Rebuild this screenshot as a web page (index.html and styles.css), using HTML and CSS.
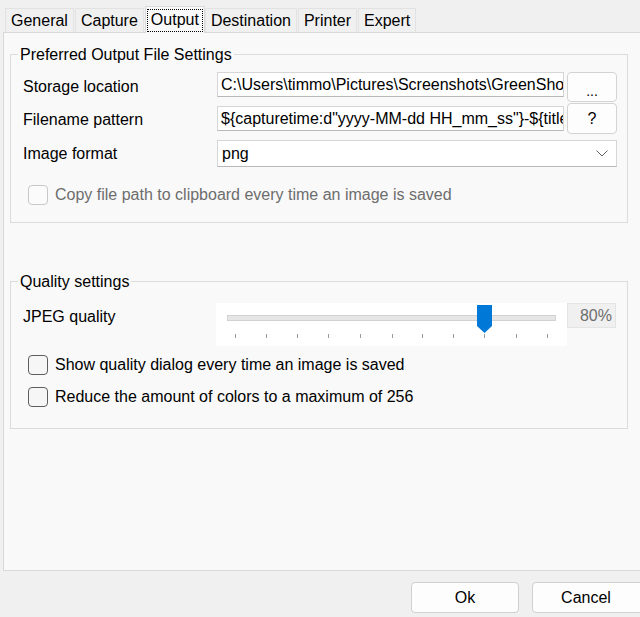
FILE: index.html
```html
<!DOCTYPE html>
<html lang="en">
<head>
<meta charset="utf-8">
<title>Settings - Output</title>
<link rel="stylesheet" href="styles.css">
</head>
<body>
<div class="window">
  <div class="tabs">
    <div class="tab">General</div>
    <div class="tab">Capture</div>
    <div class="tab tab-active"><span class="focus">Output</span></div>
    <div class="tab">Destination</div>
    <div class="tab">Printer</div>
    <div class="tab">Expert</div>
  </div>
  <div class="page">
    <fieldset class="group group-output">
      <legend class="legend">Preferred Output File Settings</legend>
      <div class="group-body">
        <div class="form-grid">
          <div class="label">Storage location</div>
          <div class="field field-top">C:\Users\timmo\Pictures\Screenshots\GreenShot</div>
          <div class="btn-small btn-top">...</div>

          <div class="label label-row2">Filename pattern</div>
          <div class="field">${capturetime:d"yyyy-MM-dd HH_mm_ss"}-${title}</div>
          <div class="btn-small">?</div>

          <div class="label label-row3">Image format</div>
          <div class="select">
            <span>png</span>
            <svg class="chevron" width="12" height="7" viewBox="0 0 12 7"><path d="M0.5 0.5 L6 6 L11.5 0.5" fill="none" stroke="#5f5f5f" stroke-width="1"/></svg>
          </div>
        </div>
        <div class="check-row check-first disabled">
          <span class="checkbox"></span>
          <span>Copy file path to clipboard every time an image is saved</span>
        </div>
      </div>
    </fieldset>

    <fieldset class="group group-quality">
      <legend class="legend">Quality settings</legend>
      <div class="group-body quality-body">
        <div class="slider-grid">
          <div class="label label-top">JPEG quality</div>
          <div class="slider">
            <svg width="351" height="43" viewBox="0 0 351 43">
              <rect x="11.5" y="12.5" width="328" height="5" fill="#e6e6e6" stroke="#d2d2d2"/>
              <g stroke="#9a9a9a" stroke-width="1">
                <line x1="19.5" y1="31" x2="19.5" y2="35"/>
                <line x1="50.5" y1="31" x2="50.5" y2="35"/>
                <line x1="81.5" y1="31" x2="81.5" y2="35"/>
                <line x1="112.5" y1="31" x2="112.5" y2="35"/>
                <line x1="144.5" y1="31" x2="144.5" y2="35"/>
                <line x1="176.5" y1="31" x2="176.5" y2="35"/>
                <line x1="206.5" y1="31" x2="206.5" y2="35"/>
                <line x1="237.5" y1="31" x2="237.5" y2="35"/>
                <line x1="268.5" y1="31" x2="268.5" y2="35"/>
                <line x1="300.5" y1="31" x2="300.5" y2="35"/>
                <line x1="331.5" y1="31" x2="331.5" y2="35"/>
              </g>
              <path d="M261 2 H276 V23 L268.5 30 L261 23 Z" fill="#0078d7"/>
            </svg>
          </div>
          <div class="value-box">80%</div>
        </div>
        <div class="check-row check-q1">
          <span class="checkbox"></span>
          <span>Show quality dialog every time an image is saved</span>
        </div>
        <div class="check-row check-q2">
          <span class="checkbox"></span>
          <span>Reduce the amount of colors to a maximum of 256</span>
        </div>
      </div>
    </fieldset>
  </div>
  <div class="footer">
    <div class="btn btn-ok">Ok</div>
    <div class="btn btn-cancel">Cancel</div>
  </div>
</div>
</body>
</html>
```
FILE: styles.css
```css
html, body {
  margin: 0;
  padding: 0;
}
body {
  width: 640px;
  height: 617px;
  overflow: hidden;
  background: #f0f0f0;
  font-family: "Liberation Sans", Arial, sans-serif;
  font-size: 16px;
  color: #000;
}
.window {
  width: 640px;
  height: 617px;
  overflow: hidden;
}

/* Tabs */
.tabs {
  display: flex;
  align-items: flex-end;
  height: 24px;
  padding: 8px 0 0 5px;
}
.tab {
  height: 23px;
  line-height: 24px;
  padding: 0 5px;
  margin-right: 1px;
  background: #f0f0f0;
  border: 1px solid #e2e2e2;
  border-bottom: none;
  white-space: nowrap;
}
.tab-active {
  position: relative;
  z-index: 1;
  height: 26px;
  margin-bottom: -1px;
  background: #f9f9f9;
  border-color: #dadada;
  padding: 0 1px;
  margin-right: 0;
}
.focus {
  display: block;
  height: 23px;
  line-height: 21px;
  padding: 0 4px;
  margin-top: 2px;
  outline: 1px dotted #000;
  outline-offset: -1px;
}

/* Tab page */
.page {
  box-sizing: border-box;
  width: 660px;
  height: 539px;
  margin-left: 3px;
  padding: 12px 0 0 6px;
  background: #f9f9f9;
  border: 1px solid #d9d9d9;
  border-right: none;
}

.group {
  box-sizing: border-box;
  width: 618px;
  margin: 0;
  padding: 0;
  border: 1px solid #dcdcdc;
  min-inline-size: 0;
}
.legend {
  margin-left: 7px;
  padding: 0 2px;
  line-height: 19px;
  font-size: 16px;
  color: #000;
}
.group-body {
  padding: 7px 0 17px 12px;
}
.group-quality {
  margin-top: 49px;
}
.quality-body {
  padding-top: 12px;
  padding-bottom: 21px;
}

.form-grid {
  display: grid;
  grid-template-columns: 191px 347px 50px;
  grid-template-rows: 32px 31px 33px;
  column-gap: 3px;
}
.label {
  align-self: center;
  white-space: nowrap;
}
.label-row2 {
  padding-top: 3px;
}
.label-row3 {
  align-self: end;
  line-height: 27px;
}
.field {
  box-sizing: border-box;
  align-self: center;
  height: 25px;
  line-height: 23px;
  padding: 0 3px;
  background: #fff;
  border: 1px solid #d6d6d6;
  border-bottom-color: #b8b8b8;
  white-space: nowrap;
  overflow: hidden;
}
.field-top {
  align-self: start;
  margin-top: 1px;
}
.btn-small {
  box-sizing: border-box;
  height: 31px;
  line-height: 29px;
  text-align: center;
  background: #fdfdfd;
  border: 1px solid #d3d3d3;
  border-radius: 4px;
}
.btn-top {
  margin-top: 1px;
  height: 30px;
  line-height: 36px;
  font-size: 14px;
}
.select {
  grid-column: 2 / 4;
  align-self: end;
  box-sizing: border-box;
  height: 27px;
  display: flex;
  align-items: center;
  justify-content: space-between;
  padding: 0 8px 0 4px;
  background: #fff;
  border: 1px solid #d6d6d6;
  border-bottom-color: #b8b8b8;
}
.chevron {
  display: block;
}

.check-row {
  display: flex;
  align-items: center;
  gap: 7px;
  height: 20px;
  margin-left: 5px;
  white-space: nowrap;
}
.check-first {
  margin-top: 18px;
}
.checkbox {
  box-sizing: border-box;
  width: 20px;
  height: 20px;
  flex: none;
  border: 1px solid #5e5e5e;
  border-radius: 4px;
  background: #f6f6f6;
}
.disabled {
  color: #6d6d6d;
}
.disabled .checkbox {
  border-color: #c8c8c8;
  background: #fbfbfb;
}

.slider-grid {
  display: grid;
  grid-template-columns: 191px 350px 49px;
  column-gap: 3px;
  height: 43px;
}
.slider-grid .slider {
  margin-left: -1px;
  width: 351px;
  height: 43px;
  background: #fff;
}
.slider svg {
  display: block;
}
.label-top {
  align-self: start;
  line-height: 28px;
}
.value-box {
  box-sizing: border-box;
  align-self: start;
  margin-left: -3px;
  width: 49px;
  height: 25px;
  line-height: 23px;
  text-align: right;
  padding-right: 3px;
  color: #6d6d6d;
  background: #f0f0f0;
  border: 1px solid #e4e4e4;
}
.check-q1 {
  margin-top: 9px;
}
.check-q2 {
  margin-top: 12px;
}

/* Footer */
.footer {
  display: flex;
  gap: 13px;
  padding: 11px 0 0 411px;
}
.btn {
  box-sizing: border-box;
  flex: none;
  height: 31px;
  line-height: 29px;
  text-align: center;
  background: #fdfdfd;
  border: 1px solid #d0d0d0;
  border-radius: 4px;
}
.btn-ok {
  width: 108px;
}
.btn-cancel {
  width: 112px;
  padding-right: 4px;
}
```
